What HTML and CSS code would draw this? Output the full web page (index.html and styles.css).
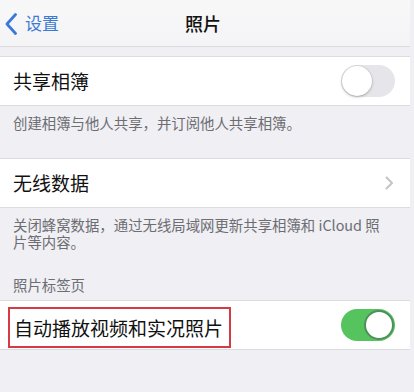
FILE: index.html
```html
<!DOCTYPE html>
<html lang="zh-CN">
<head>
<meta charset="utf-8">
<link rel="stylesheet" href="styles.css">
</head>
<body>
<div class="page">
  <header class="nav">
    <div class="nav-back">
      <svg class="back-icon" width="12" height="22" viewBox="0 0 12 22"><path d="M10.5 1.5 L2 11 L10.5 20.5" fill="none" stroke="#3d7ad6" stroke-width="2.8" stroke-linecap="round" stroke-linejoin="round"/></svg>
      <span class="back-text">设置</span>
    </div>
    <div class="nav-title">照片</div>
    <div class="nav-side"></div>
  </header>

  <section class="group group-first">
    <div class="row">
      <span class="row-label">共享相簿</span>
      <span class="switch switch-off"><span class="knob"></span></span>
    </div>
  </section>
  <p class="footer footer-1">创建相簿与他人共享，并订阅他人共享相簿。</p>

  <section class="group">
    <div class="row">
      <span class="row-label">无线数据</span>
      <svg class="chevron" width="9" height="14" viewBox="0 0 9 14"><path d="M1.5 1.5 L7 7 L1.5 12.5" fill="none" stroke="#c4c4c9" stroke-width="2" stroke-linecap="round" stroke-linejoin="round"/></svg>
    </div>
  </section>
  <p class="footer footer-2">关闭蜂窝数据，通过无线局域网更新共享相簿和 iCloud 照片等内容。</p>

  <p class="section-header">照片标签页</p>
  <section class="group">
    <div class="row row-marked">
      <span class="row-label marked">自动播放视频和实况照片</span>
      <span class="switch switch-on"><span class="knob"></span></span>
    </div>
  </section>
</div>
</body>
</html>
```

FILE: styles.css
```css
* { box-sizing: border-box; }
html, body {
  margin: 0;
  padding: 0;
  background: #efeff4;
}
body {
  width: 414px;
  height: 392px;
  overflow: hidden;
  font-family: "Noto Sans CJK SC", "Noto Sans", sans-serif;
}
.page {
  width: 410px;
  height: 392px;
  background: #efeff4;
}
.nav {
  height: 47px;
  background: linear-gradient(#f8f8f9, #f4f4f6);
  border-bottom: 1px solid #dcdce0;
  display: grid;
  grid-template-columns: 1fr auto 1fr;
  align-items: center;
  padding-right: 4px;
}
.nav-back {
  display: flex;
  align-items: center;
  padding-left: 5px;
  gap: 8px;
}
.back-icon { display: block; margin-top: 1px; }
.back-text {
  font-size: 17px;
  color: #3d7ad6;
  line-height: 20px;
}
.nav-title {
  font-size: 18px;
  font-weight: 500;
  color: #111;
  line-height: 20px;
}
.group {
  background: #fff;
  border-top: 1px solid #dcdce0;
  border-bottom: 1px solid #dcdce0;
}
.group-first { margin-top: 9px; }
.row {
  height: 48px;
  display: flex;
  align-items: center;
  justify-content: space-between;
  padding: 0 15px 0 13px;
}
.row-label {
  font-size: 19px;
  color: #111;
  line-height: 24px;
}
.footer {
  margin: 0;
  padding: 8px 19px 0 13px;
  font-size: 14.4px;
  line-height: 17px;
  color: #6d6d72;
}
.footer-1 { height: 52px; }
.footer-2 { height: 42px; padding-right: 24px; }
.section-header {
  margin: 0;
  padding: 26px 13px 7px;
  font-size: 14.4px;
  line-height: 17px;
  color: #6d6d72;
}
.chevron { display: block; margin-right: 1px; }
.switch {
  position: relative;
  width: 54px;
  height: 32px;
  border-radius: 16px;
  display: block;
}
.switch-off {
  background: #e6e6ea;
}
.switch-off .knob {
  position: absolute;
  left: 1px;
  top: 1px;
  width: 30px;
  height: 30px;
  border-radius: 50%;
  background: #fff;
  box-shadow: 0 1px 3px rgba(0,0,0,0.25), 0 0 0 0.5px rgba(0,0,0,0.08);
}
.switch-on {
  background: #55c45e;
}
.switch-on .knob {
  position: absolute;
  right: 1px;
  top: 1px;
  width: 30px;
  height: 30px;
  border-radius: 50%;
  background: #fff;
  border: 2px solid #4f8f5c;
}
.row-marked {
  padding-left: 8px;
}
.marked {
  align-self: flex-end;
  margin-bottom: 1px;
  height: 41px;
  line-height: 37px;
  border: 2px solid #d63a43;
  padding: 0 6px 0 4px;
}
```
